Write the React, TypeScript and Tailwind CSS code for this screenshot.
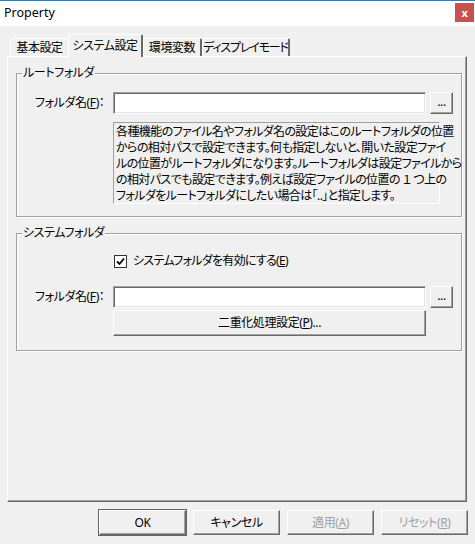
import type { ReactNode } from 'react';

const font = "font-['Noto_Sans','Noto_Sans_CJK_JP',sans-serif] [font-feature-settings:'palt'] tracking-[-0.4px]";

function Mn({ c }: { c: string }) {
  return <span className="underline">{c}</span>;
}

function Btn({
  children,
  className = '',
  disabled = false,
  isDefault = false,
}: {
  children: ReactNode;
  className?: string;
  disabled?: boolean;
  isDefault?: boolean;
}) {
  return (
    <button
      className={`flex items-center justify-center bg-[#f0f0f0] text-[12px] leading-none whitespace-nowrap border border-t-white border-l-white border-r-[#696969] border-b-[#696969] ${
        isDefault ? 'shadow-[0_0_0_1px_#646464,inset_-1px_-1px_0_#a0a0a0]' : 'shadow-[inset_-1px_-1px_0_#a0a0a0]'
      } ${disabled ? 'text-[#a0a0a0]' : 'text-black'} ${className}`}
    >
      {children}
    </button>
  );
}

function Input() {
  return (
    <div className="w-[313px] h-[22px] bg-white border border-t-[#a0a0a0] border-l-[#a0a0a0] border-r-white border-b-white shadow-[inset_1px_1px_0_#696969,inset_-1px_-1px_0_#e3e3e3]" />
  );
}

function Group({ title, children, className = '' }: { title: string; children: ReactNode; className?: string }) {
  return (
    <div className={`relative border border-[#a0a0a0] shadow-[1px_1px_0_white,inset_1px_1px_0_white] ${className}`}>
      <span className="absolute -top-[9px] left-[5px] bg-[#f0f0f0] px-[1px] text-[12px] leading-[16px] whitespace-nowrap">
        {title}
      </span>
      {children}
    </div>
  );
}

function FolderRow() {
  return (
    <div className="flex items-center">
      <div className="w-[96px] pl-[18px] text-[12px] leading-[16px] whitespace-nowrap">
        フォルダ名(<Mn c="F" />)：
      </div>
      <Input />
      <Btn className="ml-[4px] w-[23px] h-[22px] items-end pb-[5px]">...</Btn>
    </div>
  );
}

// the tab left of the active one has its right edge hidden under it
const tabs = [
  { label: '基本設定', w: 'w-[58px]', t: 'border-r-0' },
  { label: 'システム設定', w: 'w-[75px]', t: '', active: true },
  { label: '環境変数', w: 'w-[59px]', t: 'border-r-2' },
  { label: 'ディスプレイモード', w: 'w-[88px]', t: 'border-r-2 tracking-[-1.2px]' },
];

const desc = [
  '各種機能のファイル名やフォルダ名の設定はこのルートフォルダの位置',
  'からの相対パスで設定できます。何も指定しないと、開いた設定ファイ',
  'ルの位置がルートフォルダになります。ルートフォルダは設定ファイルから',
  'の相対パスでも設定できます。例えば設定ファイルの位置の １ つ上の',
  'フォルダをルートフォルダにしたい場合は「..」と指定します。',
];

export default function App() {
  return (
    <div className={`w-[475px] h-[544px] flex flex-col bg-[#f0f0f0] text-black ${font}`}>
      {/* title bar */}
      <div className="h-[26px] shrink-0 bg-white border-t border-[#1883d7] flex items-start justify-between">
        <span className="pl-[4px] pt-[4px] text-[12.5px] leading-[16px] tracking-normal">Property</span>
        <div className="mt-[2px] mr-[1px] w-[19px] h-[19px] bg-[#c75050] flex items-center justify-center text-white text-[11px] font-bold leading-none">
          x
        </div>
      </div>

      <div className="flex-1 flex flex-col pt-[8px] pl-[7px] pr-[8px]">
        {/* tabs */}
        <div className="flex items-end h-[22px] pl-[3px]">
          {tabs.map((t) =>
            t.active ? (
              <div
                key={t.label}
                className={`${t.w} relative z-10 -mb-px h-[23px] bg-[#f0f0f0] border-t border-l border-t-white border-l-white border-r-2 border-r-[#696969] rounded-t-[2px] flex items-start justify-center pt-[3px] text-[12px] leading-[16px] whitespace-nowrap`}
              >
                {t.label}
              </div>
            ) : (
              <div
                key={t.label}
                className={`${t.w} ${t.t} h-[18px] border-t border-l border-t-white border-l-white border-r-[#696969] rounded-t-[2px] flex items-center justify-center pt-[1px] text-[12px] leading-[16px] whitespace-nowrap overflow-hidden`}
              >
                {t.label}
              </div>
            ),
          )}
        </div>

        {/* panel */}
        <div className="flex-1 border-t border-l border-t-white border-l-white border-r border-b border-r-[#696969] border-b-[#696969] shadow-[inset_-1px_-1px_0_#a0a0a0] pl-[8px] pr-[4px]">
          <Group title="ルートフォルダ" className="mt-[16px] pt-[18px] pb-[12px]">
            <FolderRow />
            <div className="ml-[96px] mt-[8px] w-[327px] h-[82px] border border-t-[#a0a0a0] border-l-[#a0a0a0] border-r-white border-b-white px-[2px] pt-[1px] text-[12px] leading-[16px] whitespace-nowrap tracking-[-0.6px]">
              {desc.map((l) => (
                <div key={l}>{l}</div>
              ))}
            </div>
          </Group>

          <Group title="システムフォルダ" className="mt-[16px] pt-[19px] pb-[14px]">
            <div className="ml-[97px] flex items-center h-[16px] gap-[6px]">
              <div className="w-[13px] h-[13px] bg-white border border-[#333] flex items-center justify-center">
                <svg width="9" height="9" viewBox="0 0 9 9">
                  <path d="M1 4.5 L3.5 7 L8 1.5" fill="none" stroke="#000" strokeWidth="1.8" />
                </svg>
              </div>
              <span className="text-[12px] leading-[16px] whitespace-nowrap tracking-[-0.7px]">
                システムフォルダを有効にする(<Mn c="E" />)
              </span>
            </div>
            <div className="mt-[17px]">
              <FolderRow />
            </div>
            <Btn className="ml-[96px] mt-[2px] w-[313px] h-[26px]">
              二重化処理設定(<Mn c="P" />)...
            </Btn>
          </Group>
        </div>

        {/* bottom buttons */}
        <div className="h-[42px] shrink-0 flex items-start justify-end gap-[7px] pt-[8px] -mr-px">
          <Btn isDefault className="w-[87px] h-[25px]">OK</Btn>
          <Btn className="w-[87px] h-[25px]">キャンセル</Btn>
          <Btn disabled className="w-[87px] h-[25px]">
            適用(<Mn c="A" />)
          </Btn>
          <Btn disabled className="w-[87px] h-[25px]">
            リセット(<Mn c="R" />)
          </Btn>
        </div>
      </div>
    </div>
  );
}
